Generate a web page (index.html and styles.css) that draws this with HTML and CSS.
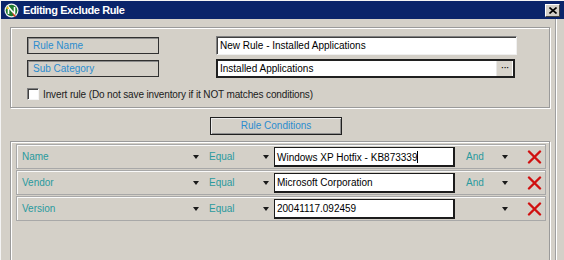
FILE: index.html
```html
<!DOCTYPE html>
<html lang="en">
<head>
  <meta charset="UTF-8">
  <title>Editing Exclude Rule</title>
  <link rel="stylesheet" href="styles.css">
</head>
<body>
  <div class="window">
    <!-- title bar -->
    <div class="titlebar">
      <svg class="app-icon" width="15" height="15" viewBox="0 0 15 15">
        <circle cx="7.5" cy="7.5" r="7" fill="#f4f4f4"/>
        <circle cx="7.5" cy="7.5" r="5.8" fill="#1f7a2e"/>
        <path d="M4.5 11 V4 L10.5 11 V4" stroke="#fff" stroke-width="1.6" fill="none"/>
        <path d="M8 9 L12 13 L10 14 Z" fill="#d83a1a"/>
        <path d="M2 6 L4 3 L5 6 Z" fill="#f0c020"/>
      </svg>
      <span class="title">Editing Exclude Rule</span>
      <div class="close-btn">
        <svg width="8" height="7" viewBox="0 0 8 7"><path d="M0.5 0.5 L7.5 6.5 M7.5 0.5 L0.5 6.5" stroke="#000" stroke-width="1.6"/></svg>
      </div>
    </div>

    <div class="client">
      <!-- rule header -->
      <div class="group top-group">
        <div class="field-row">
          <div class="caption">Rule Name</div>
          <div class="textbox">New Rule - Installed Applications</div>
        </div>
        <div class="field-row">
          <div class="caption">Sub Category</div>
          <div class="textbox textbox-focus">
            <span>Installed Applications</span>
            <div class="browse-btn">&middot;&middot;&middot;</div>
          </div>
        </div>
        <label class="check-row">
          <span class="checkbox"></span>
          Invert rule (Do not save inventory if it NOT matches conditions)
        </label>
      </div>

      <div class="section-btn">Rule Conditions</div>

      <!-- conditions -->
      <div class="group cond-group">
        <div class="cond">
          <div class="combo combo-field"><span>Name</span><i class="arrow"></i></div>
          <div class="combo combo-op"><span>Equal</span><i class="arrow"></i></div>
          <div class="value">Windows XP Hotfix - KB873339<span class="caret"></span></div>
          <div class="combo combo-join"><span>And</span><i class="arrow"></i></div>
          <svg class="remove" width="15" height="14" viewBox="0 0 15 14"><path d="M2 1.5 L13 12.5 M13 1.5 L2 12.5" stroke="#d01010" stroke-width="2.4" stroke-linecap="round"/></svg>
        </div>
        <div class="cond">
          <div class="combo combo-field"><span>Vendor</span><i class="arrow"></i></div>
          <div class="combo combo-op"><span>Equal</span><i class="arrow"></i></div>
          <div class="value">Microsoft Corporation</div>
          <div class="combo combo-join"><span>And</span><i class="arrow"></i></div>
          <svg class="remove" width="15" height="14" viewBox="0 0 15 14"><path d="M2 1.5 L13 12.5 M13 1.5 L2 12.5" stroke="#d01010" stroke-width="2.4" stroke-linecap="round"/></svg>
        </div>
        <div class="cond">
          <div class="combo combo-field"><span>Version</span><i class="arrow"></i></div>
          <div class="combo combo-op"><span>Equal</span><i class="arrow"></i></div>
          <div class="value">20041117.092459</div>
          <div class="combo combo-join"><span></span><i class="arrow"></i></div>
          <svg class="remove" width="15" height="14" viewBox="0 0 15 14"><path d="M2 1.5 L13 12.5 M13 1.5 L2 12.5" stroke="#d01010" stroke-width="2.4" stroke-linecap="round"/></svg>
        </div>
      </div>
    </div>
  </div>
</body>
</html>
```

FILE: styles.css
```css
* {
  box-sizing: border-box;
}
body {
  margin: 0;
  background: #d4d0c8;
  font-family: "Liberation Sans", Arial, sans-serif;
  font-size: 10px;
  color: #000;
}
.window {
  width: 564px;
  height: 260px;
  overflow: hidden;
  border-top: 1px solid #f4f4f4;
  border-left: 1px solid #f4f4f4;
  position: relative;
}
.titlebar {
  height: 18px;
  background: #0a246a;
  display: flex;
  align-items: center;
  padding-left: 3px;
  padding-right: 4px;
}
.app-icon {
  margin-right: 4px;
}
.title {
  color: #fff;
  font-weight: bold;
  font-size: 11px;
  letter-spacing: -0.4px;
  flex: 1;
}
.close-btn {
  width: 15px;
  height: 13px;
  background: #d4d0c8;
  border: 1px solid;
  border-color: #fff #404040 #404040 #fff;
  display: flex;
  align-items: center;
  justify-content: center;
}
.client {
  padding: 8px 0 0 9px;
  border-right: 1px solid #a0a0a0;
  width: 555px;
  height: 241px;
  box-shadow: 1px 0 0 #fff;
}
.group {
  width: 540px;
  border: 1px solid #9a9a9a;
  box-shadow: inset 1px 1px 0 #fff, 1px 1px 0 #fff;
}
.top-group {
  height: 81px;
  padding: 8px 0 0 16px;
}
.field-row {
  display: flex;
  align-items: center;
  height: 19px;
  margin-bottom: 4px;
}
.caption {
  width: 132px;
  height: 17px;
  border: 1px solid #303030;
  box-shadow: inset 1px 1px 0 #8a8a8a;
  color: #2b8ccf;
  padding: 2px 0 0 5px;
  margin-right: 57px;
}
.textbox {
  width: 301px;
  height: 19px;
  background: #fff;
  border: 1px solid;
  border-color: #808080 #f0f0f0 #f0f0f0 #808080;
  box-shadow: inset 1px 1px 0 #404040;
  padding: 3px 0 0 3px;
  white-space: nowrap;
}
.textbox-focus {
  width: 299px;
  border: 2px solid #202020;
  box-shadow: none;
  display: flex;
  align-items: center;
  justify-content: space-between;
  padding: 0 0 0 2px;
}
.browse-btn {
  width: 16px;
  height: 15px;
  background: #d8d4cc;
  border-left: 1px solid #e8e8e8;
  text-align: center;
  font-size: 11px;
  line-height: 13px;
  letter-spacing: -1px;
  margin-right: 1px;
}
.check-row {
  display: flex;
  align-items: center;
  margin-top: 10px;
  color: #202020;
  letter-spacing: -0.13px;
}
.checkbox {
  width: 12px;
  height: 12px;
  background: #fff;
  border: 1px solid;
  border-color: #808080 #f4f4f4 #f4f4f4 #808080;
  box-shadow: inset 1px 1px 0 #404040;
  margin-right: 4px;
}
.section-btn {
  width: 132px;
  height: 18px;
  margin: 9px 0 0 200px;
  border: 1px solid #202020;
  box-shadow: inset 1px 1px 0 #ececec, inset -1px -1px 0 #909090;
  color: #2b8ccf;
  text-align: center;
  line-height: 15px;
}
.cond-group {
  margin-top: 6px;
  height: 140px;
  padding: 2px 0 0 5px;
}
.cond {
  width: 530px;
  height: 25px;
  margin-bottom: 1px;
  border: 1px solid #a8a8a8;
  box-shadow: inset 1px 1px 0 #fafafa;
  display: flex;
  align-items: center;
}
.combo {
  display: flex;
  align-items: center;
  justify-content: space-between;
  color: #2a9a9e;
  font-size: 10px;
}
.combo-field {
  width: 188px;
  padding: 0 6px 0 5px;
}
.combo-op {
  width: 68px;
  padding: 0 4px 0 4px;
}
.combo-join {
  width: 57px;
  padding: 0 5px 0 10px;
  margin-left: 1px;
}
.arrow {
  width: 0;
  height: 0;
  border-left: 3px solid transparent;
  border-right: 3px solid transparent;
  border-top: 4px solid #1a1a1a;
}
.value {
  width: 181px;
  height: 20px;
  margin-left: 1px;
  background: #fff;
  border: 2px solid #1c1c1c;
  border-top-width: 1px;
  border-left-width: 1px;
  padding: 3px 0 0 2px;
  white-space: nowrap;
  font-size: 10px;
}
.caret {
  display: inline-block;
  width: 1px;
  height: 12px;
  background: #000;
  vertical-align: -2px;
}
.remove {
  margin-left: 14px;
}
```
